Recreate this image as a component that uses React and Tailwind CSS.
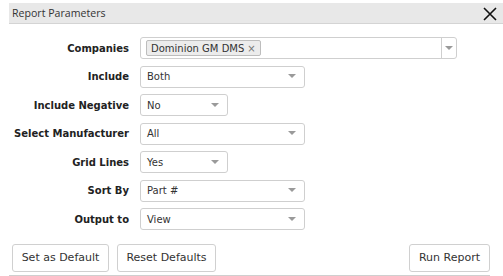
import React from "react";

const Arrow = () => (
  <svg width="8" height="5" viewBox="0 0 8 5" className="shrink-0">
    <path d="M0 0 L8 0 L4 4 Z" fill="#9a9a9a" />
  </svg>
);

const Select = ({ value, w }) => (
  <div className={`${w} h-[22px] border border-[#cfcfcf] rounded-[3px] bg-white flex items-center justify-between pl-[6px] pr-[8px] text-[#333]`}>
    <span>{value}</span>
    <Arrow />
  </div>
);

const Row = ({ label, children }) => (
  <div className="flex items-center">
    <div className="w-[129px] text-right font-bold text-[#222]">{label}</div>
    <div className="ml-[11px]">{children}</div>
  </div>
);

export default function App() {
  return (
    <div className="w-[503px] h-[276px] bg-white relative overflow-hidden text-[10px]" style={{ fontFamily: "'DejaVu Sans', sans-serif" }}>
      <div className="ml-[9px] mt-[3px] h-[21px] bg-[#e8e8e8] border-b border-[#d4d4d4] flex items-center justify-between pl-[3px] pr-[6px]">
        <span className="text-[10.6px] text-[#333] pt-[2px]" style={{ fontFamily: "'Open Sans', sans-serif" }}>Report Parameters</span>
        <svg width="14" height="14" viewBox="0 0 14 14" className="mt-[2px]">
          <path d="M1 1 L13 13 M13 1 L1 13" stroke="#111" strokeWidth="1.6" />
        </svg>
      </div>
      <div className="mt-[13px] flex flex-col gap-[6.5px]">
        <Row label="Companies">
          <div className="w-[317px] h-[22px] border border-[#cfcfcf] rounded-[3px] bg-white flex items-center">
            <div className="flex-1 pl-[5px] flex items-center">
              <span className="h-[16px] border border-[#bdbdbd] rounded-[2px] bg-[#ececec] px-[4px] flex items-center text-[#333]">
                Dominion GM DMS <span className="ml-[3px] text-[#777] text-[10px]">×</span>
              </span>
            </div>
            <div className="h-full border-l border-[#cfcfcf] w-[15px] flex items-center justify-center">
              <Arrow />
            </div>
          </div>
        </Row>
        <Row label="Include"><Select value="Both" w="w-[165px]" /></Row>
        <Row label="Include Negative"><Select value="No" w="w-[88px]" /></Row>
        <Row label="Select Manufacturer"><Select value="All" w="w-[165px]" /></Row>
        <Row label="Grid Lines"><Select value="Yes" w="w-[88px]" /></Row>
        <Row label="Sort By"><Select value="Part #" w="w-[165px]" /></Row>
        <Row label="Output to"><Select value="View" w="w-[165px]" /></Row>
      </div>
      <div className="mt-[14px] ml-[9px] mr-[13px] border-b border-[#cfcfcf] pb-[3px] flex items-center pl-[3px]">
        <button className="w-[97px] h-[28px] border border-[#d0d0d0] rounded-[3px] bg-white text-[#333] text-[11px] pt-[1px]">Set as Default</button>
        <button className="ml-[8px] w-[99px] h-[28px] border border-[#d0d0d0] rounded-[3px] bg-white text-[#333] text-[11px] pt-[1px]">Reset Defaults</button>
        <button className="ml-auto w-[81px] h-[28px] border border-[#d0d0d0] rounded-[3px] bg-white text-[#333] text-[11px] pt-[1px]">Run Report</button>
      </div>
    </div>
  );
}
